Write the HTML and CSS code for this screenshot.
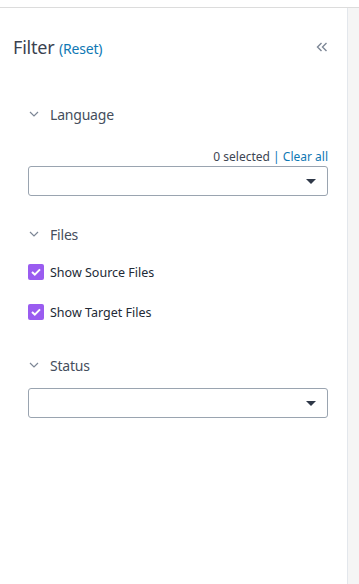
FILE: index.html
```html
<!DOCTYPE html>
<html>
<head>
<meta charset="utf-8">
<link rel="stylesheet" href="styles.css">
</head>
<body>
<div class="topbar"></div>
<div class="layout">
  <aside class="panel">
    <div class="panel-head">
      <div class="title">Filter <span class="reset">(<a>Reset</a>)</span></div>
      <svg class="collapse" width="12" height="10" viewBox="0 0 12 10"><path d="M5.5 1 L1.5 5 L5.5 9 M10.5 1 L6.5 5 L10.5 9" fill="none" stroke="#7d8796" stroke-width="1.4"/></svg>
    </div>

    <section class="group language">
      <div class="group-head">
        <svg class="chev" width="10" height="6" viewBox="0 0 10 6"><path d="M1 1 L5 5 L9 1" fill="none" stroke="#7d8796" stroke-width="1.2"/></svg>
        <span>Language</span>
      </div>
      <div class="meta">0 selected <span class="sep">|</span> <a>Clear all</a></div>
      <div class="select"><span class="caret"></span></div>
    </section>

    <section class="group files">
      <div class="group-head">
        <svg class="chev" width="10" height="6" viewBox="0 0 10 6"><path d="M1 1 L5 5 L9 1" fill="none" stroke="#7d8796" stroke-width="1.2"/></svg>
        <span>Files</span>
      </div>
      <label class="check"><span class="box"><svg width="12" height="10" viewBox="0 0 12 10"><path d="M2 5 L4.8 7.6 L10 2.4" fill="none" stroke="#fff" stroke-width="2"/></svg></span>Show Source Files</label>
      <label class="check"><span class="box"><svg width="12" height="10" viewBox="0 0 12 10"><path d="M2 5 L4.8 7.6 L10 2.4" fill="none" stroke="#fff" stroke-width="2"/></svg></span>Show Target Files</label>
    </section>

    <section class="group status">
      <div class="group-head">
        <svg class="chev" width="10" height="6" viewBox="0 0 10 6"><path d="M1 1 L5 5 L9 1" fill="none" stroke="#7d8796" stroke-width="1.2"/></svg>
        <span>Status</span>
      </div>
      <div class="select"><span class="caret"></span></div>
    </section>
  </aside>
  <div class="side"></div>
</div>
</body>
</html>
```

FILE: styles.css
```css
html, body {
  margin: 0;
  padding: 0;
  height: 100%;
  background: #fff;
}
body {
  font-family: "Noto Sans", "Open Sans", sans-serif;
  color: #333b47;
  overflow: hidden;
}
.topbar {
  height: 7px;
  border-bottom: 1px solid #dcdcdc;
  background: #fff;
}
.layout {
  display: flex;
  height: 576px;
}
.panel {
  width: 348px;
  box-sizing: border-box;
  border-right: 1px solid #e3e7ec;
  padding: 0 19px 0 28px;
}
.side {
  flex: 1;
  background: #f5f5f5;
}
.panel-head {
  display: flex;
  align-items: center;
  justify-content: space-between;
  margin-left: -15px;
  height: 78px;
}
.title {
  font-size: 18px;
  color: #3a4250;
  letter-spacing: -0.2px;
}
.reset {
  font-size: 14px;
  color: #0f78b4;
}
.reset a { color: #0f78b4; }
.collapse { margin-right: 0; }
.group-head {
  display: flex;
  align-items: center;
  height: 20px;
  font-size: 14px;
  letter-spacing: -0.2px;
  color: #454e5c;
}
.chev { margin: 0 11px 0 1px; }
.language { margin-top: 18px; }
.meta {
  text-align: right;
  font-size: 12px;
  margin-top: 25px;
  color: #3d4552;
  line-height: 16px;
}
.meta .sep { color: #0f78b4; }
.meta a { color: #0f78b4; }
.select {
  position: relative;
  height: 28px;
  border: 1px solid #9aa4b0;
  border-radius: 3px;
  margin-top: 1px;
}
.caret {
  position: absolute;
  right: 11px;
  top: 12px;
  width: 0;
  height: 0;
  border-left: 5px solid transparent;
  border-right: 5px solid transparent;
  border-top: 5px solid #2f3848;
}
.files { margin-top: 28px; }
.check {
  display: flex;
  align-items: center;
  font-size: 12.5px;
  color: #222a36;
  margin-top: 20px;
  height: 16px;
}
.check + .check { margin-top: 24px; }
.box {
  width: 16px;
  height: 16px;
  border-radius: 2px;
  background: #9a5cf0;
  display: flex;
  align-items: center;
  justify-content: center;
  margin-right: 6px;
}
.status { margin-top: 35px; }
.status .select { margin-top: 13px; }
```
